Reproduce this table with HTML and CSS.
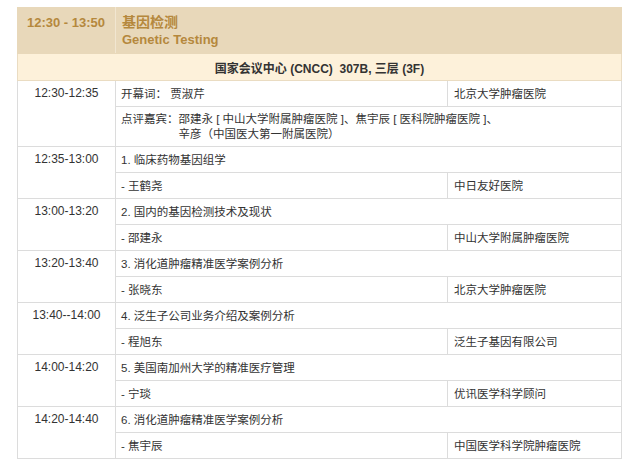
FILE: index.html
```html
<!DOCTYPE html>
<html lang="zh">
<head>
<meta charset="utf-8">
<link rel="stylesheet" href="styles.css">
</head>
<body>
<table class="agenda">
  <colgroup>
    <col class="c-time">
    <col class="c-topic">
    <col class="c-org">
  </colgroup>
  <thead>
    <tr class="head">
      <th class="head-time">12:30 - 13:50</th>
      <th class="head-title" colspan="2"><div class="zh">基因检测</div><div class="en">Genetic Testing</div></th>
    </tr>
    <tr class="venue">
      <th colspan="3">国家会议中心 (CNCC)&nbsp;&nbsp;307B, 三层 (3F)</th>
    </tr>
  </thead>
  <tbody>
    <tr>
      <td class="time" rowspan="2">12:30-12:35</td>
      <td>开幕词：&nbsp;贾淑芹</td>
      <td class="org">北京大学肿瘤医院</td>
    </tr>
    <tr class="review">
      <td colspan="2"><div class="rv"><span class="rv-label">点评嘉宾：</span><span class="rv-names">邵建永 [ 中山大学附属肿瘤医院 ]、焦宇辰 [ 医科院肿瘤医院 ]、<br>辛彦（中国医大第一附属医院）</span></div></td>
    </tr>
    <tr>
      <td class="time" rowspan="2">12:35-13:00</td>
      <td colspan="2">1. 临床药物基因组学</td>
    </tr>
    <tr>
      <td>- 王鹤尧</td>
      <td class="org">中日友好医院</td>
    </tr>
    <tr>
      <td class="time" rowspan="2">13:00-13:20</td>
      <td colspan="2">2. 国内的基因检测技术及现状</td>
    </tr>
    <tr>
      <td>- 邵建永</td>
      <td class="org">中山大学附属肿瘤医院</td>
    </tr>
    <tr>
      <td class="time" rowspan="2">13:20-13:40</td>
      <td colspan="2">3. 消化道肿瘤精准医学案例分析</td>
    </tr>
    <tr>
      <td>- 张晓东</td>
      <td class="org">北京大学肿瘤医院</td>
    </tr>
    <tr>
      <td class="time" rowspan="2">13:40--14:00</td>
      <td colspan="2">4. 泛生子公司业务介绍及案例分析</td>
    </tr>
    <tr>
      <td>- 程旭东</td>
      <td class="org">泛生子基因有限公司</td>
    </tr>
    <tr>
      <td class="time" rowspan="2">14:00-14:20</td>
      <td colspan="2">5. 美国南加州大学的精准医疗管理</td>
    </tr>
    <tr>
      <td>- 宁琰</td>
      <td class="org">优讯医学科学顾问</td>
    </tr>
    <tr>
      <td class="time" rowspan="2">14:20-14:40</td>
      <td colspan="2">6. 消化道肿瘤精准医学案例分析</td>
    </tr>
    <tr>
      <td>- 焦宇辰</td>
      <td class="org">中国医学科学院肿瘤医院</td>
    </tr>
  </tbody>
</table>
</body>
</html>
```

FILE: styles.css
```css
html, body {
  margin: 0;
  padding: 0;
  background: #ffffff;
}

body {
  padding: 7px 0 0 17px;
  font-family: "Liberation Sans", "Noto Sans CJK SC", sans-serif;
  color: #333333;
}

.agenda {
  border-collapse: collapse;
  table-layout: fixed;
  width: 604px;
}

.c-time { width: 98px; }
.c-topic { width: 332px; }
.c-org { width: 174px; }

.agenda th,
.agenda td {
  padding: 0;
  text-align: left;
  font-weight: normal;
}

.agenda .head th {
  background: #e8d8ba;
  color: #b5883d;
  font-weight: bold;
  vertical-align: top;
  height: 46px;
  box-sizing: border-box;
  border: 1px solid #e8d8ba;
  padding-top: 6px;
}

.agenda .head .head-time {
  font-size: 13px;
  line-height: 16px;
  padding-left: 9px;
  padding-top: 7px;
  border-right: 1px solid #f1e6d1;
}

.agenda .head .head-title {
  padding-left: 6px;
  font-size: 14px;
  line-height: 17px;
}

.head .en {
  font-size: 13px;
}

.agenda .venue th {
  background: #fdf1da;
  border: 1px solid #eadcc2;
  height: 26px;
  text-align: center;
  font-weight: bold;
  font-size: 12px;
  color: #333333;
}

.agenda tbody td {
  border: 1px solid #dcdcdc;
  height: 26px;
  box-sizing: border-box;
  font-size: 11.5px;
  line-height: 14px;
  padding-left: 5px;
  vertical-align: middle;
}

.agenda tbody td.time {
  text-align: center;
  vertical-align: top;
  padding: 5px 0 0;
  font-size: 12px;
}

.agenda tbody td.org {
  padding-left: 6px;
}

.agenda .review td {
  height: 40px;
}

.rv {
  display: flex;
}

.rv-label {
  flex: none;
}

.rv-names {
  line-height: 15px;
}
```
